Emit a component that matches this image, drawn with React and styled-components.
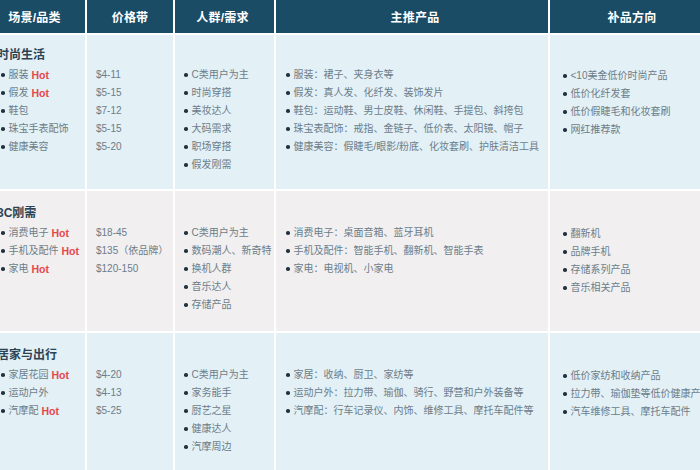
import React from 'react';
import styled, { createGlobalStyle } from 'styled-components';

const GlobalStyle = createGlobalStyle`
  html, body {
    margin: 0;
    padding: 0;
    background: #ffffff;
    overflow: hidden;
  }
  body {
    font-family: "Liberation Sans", "Noto Sans CJK SC", sans-serif;
  }
`;

const headers = [
  { label: '场景/品类', pl: 0, pr: 16 },
  { label: '价格带', pl: 0, pr: 0 },
  { label: '人群/需求', pl: 0, pr: 4 },
  { label: '主推产品', pl: 6, pr: 0 },
  { label: '补品方向', pl: 14, pr: 0 },
];

const rows = [
  {
    title: '时尚生活',
    bg: '#e3f0f6',
    top: 10,
    cats: [
      { name: '服装', hot: true },
      { name: '假发', hot: true },
      { name: '鞋包' },
      { name: '珠宝手表配饰' },
      { name: '健康美容' },
    ],
    prices: ['$4-11', '$5-15', '$7-12', '$5-15', '$5-20'],
    people: ['C类用户为主', '时尚穿搭', '美妆达人', '大码需求', '职场穿搭', '假发刚需'],
    products: [
      '服装：裙子、夹身衣等',
      '假发：真人发、化纤发、装饰发片',
      '鞋包：运动鞋、男士皮鞋、休闲鞋、手提包、斜挎包',
      '珠宝表配饰：戒指、金链子、低价表、太阳镜、帽子',
      '健康美容：假睫毛/眼影/粉底、化妆套刷、护肤清洁工具',
    ],
    extras: ['<10美金低价时尚产品', '低价化纤发套', '低价假睫毛和化妆套刷', '网红推荐款'],
  },
  {
    title: '3C刚需',
    bg: '#f1eff0',
    top: 12,
    cats: [
      { name: '消费电子', hot: true },
      { name: '手机及配件', hot: true },
      { name: '家电', hot: true },
    ],
    prices: ['$18-45', '$135（依品牌）', '$120-150'],
    people: ['C类用户为主', '数码潮人、新奇特', '换机人群', '音乐达人', '存储产品'],
    products: [
      '消费电子：桌面音箱、蓝牙耳机',
      '手机及配件：智能手机、翻新机、智能手表',
      '家电：电视机、小家电',
    ],
    extras: ['翻新机', '品牌手机', '存储系列产品', '音乐相关产品'],
  },
  {
    title: '居家与出行',
    bg: '#e3f0f6',
    top: 12,
    cats: [
      { name: '家居花园', hot: true },
      { name: '运动户外' },
      { name: '汽摩配', hot: true },
    ],
    prices: ['$4-20', '$4-13', '$5-25'],
    people: ['C类用户为主', '家务能手', '厨艺之星', '健康达人', '汽摩周边'],
    products: [
      '家居：收纳、厨卫、家纺等',
      '运动户外：拉力带、瑜伽、骑行、野营和户外装备等',
      '汽摩配：行车记录仪、内饰、维修工具、摩托车配件等',
    ],
    extras: ['低价家纺和收纳产品', '拉力带、瑜伽垫等低价健康产品', '汽车维修工具、摩托车配件'],
  },
];

const App = () => {
  return (
    <>
      <GlobalStyle />
      <Table>
        {headers.map((h) => (
          <HeaderCell key={h.label} $pl={h.pl} $pr={h.pr}>
            {h.label}
          </HeaderCell>
        ))}
        {rows.map((row) => (
          <React.Fragment key={row.title}>
            <Cell $bg={row.bg} $pl={1} $top={row.top}>
              <Title>{row.title}</Title>
              {row.cats.map((c) => (
                <Line key={c.name}>
                  <Dot $gap={4} />
                  {c.name}
                  {c.hot && <Hot> Hot</Hot>}
                </Line>
              ))}
            </Cell>
            <Cell $bg={row.bg} $pl={9} $top={row.top + 21}>
              {row.prices.map((p, i) => (
                <Line key={i}>{p}</Line>
              ))}
            </Cell>
            <Cell $bg={row.bg} $pl={9} $top={row.top + 21}>
              {row.people.map((p) => (
                <Line key={p}>
                  <Dot />
                  {p}
                </Line>
              ))}
            </Cell>
            <Cell $bg={row.bg} $pl={10} $top={row.top + 21}>
              {row.products.map((p) => (
                <Line key={p}>
                  <Dot />
                  {p}
                </Line>
              ))}
            </Cell>
            <Cell $bg={row.bg} $pl={13} $top={row.top + 22}>
              {row.extras.map((p) => (
                <Line key={p}>
                  <Dot />
                  {p}
                </Line>
              ))}
            </Cell>
          </React.Fragment>
        ))}
      </Table>
    </>
  );
};

export default App;

const Table = styled.div`
  display: grid;
  grid-template-columns: 85px 86px 99px 272px 1fr;
  grid-template-rows: 33px 154px 140px 140px;
  gap: 2px;
  width: 700px;
  height: 470px;
  overflow: hidden;
  background: #ffffff;
`;

const HeaderCell = styled.div`
  display: flex;
  align-items: center;
  justify-content: center;
  padding-left: ${(p) => p.$pl}px;
  padding-right: ${(p) => p.$pr}px;
  background: #1a4c66;
  color: #ffffff;
  font-size: 12px;
  font-weight: bold;
  letter-spacing: 0.2px;
`;

const Cell = styled.div`
  display: flex;
  flex-direction: column;
  padding-top: ${(p) => p.$top}px;
  padding-left: ${(p) => p.$pl}px;
  background: ${(p) => p.$bg};
  color: #6b7d89;
  font-size: 10px;
  overflow: hidden;
`;

const Title = styled.div`
  height: 21px;
  line-height: 21px;
  margin-left: -4px;
  font-size: 12px;
  font-weight: bold;
  color: #2c4353;
`;

const Line = styled.div`
  display: flex;
  align-items: center;
  height: 18px;
  line-height: 18px;
  white-space: pre;
`;

const Dot = styled.span`
  flex: none;
  width: 3.5px;
  height: 3.5px;
  border-radius: 50%;
  background: #22333f;
  margin-right: ${(p) => p.$gap || 4}px;
`;

const Hot = styled.span`
  color: #e5474b;
  font-size: 10.5px;
  font-weight: 600;
`;
